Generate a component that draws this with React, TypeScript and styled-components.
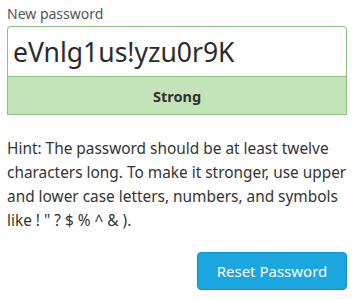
import { FC } from 'react'
import styled, { createGlobalStyle } from 'styled-components'

const GlobalStyle = createGlobalStyle`
  body {
    margin: 0;
    background: #fff;
    font-family: 'Noto Sans', 'Open Sans', sans-serif;
    color: #333;
  }
`

interface StrengthProps {
  level: string
}

const Strength: FC<StrengthProps> = ({ level }) => {
  return <StrengthBar>{level}</StrengthBar>
}

const App: FC = () => {
  return (
    <>
      <GlobalStyle />
      <Form>
        <Label htmlFor="pw">New password</Label>
        <PasswordInput id="pw" type="text" defaultValue="eVnlg1us!yzu0r9K" />
        <Strength level="Strong" />
        <Hint>
          Hint: The password should be at least twelve characters long. To make it stronger, use upper
          and lower case letters, numbers, and symbols like ! " ? $ % ^ &amp; ).
        </Hint>
        <Actions>
          <SubmitButton type="button">Reset Password</SubmitButton>
        </Actions>
      </Form>
    </>
  )
}

const Form = styled.div`
  display: flex;
  flex-direction: column;
  padding: 4px 7px 0 7px;
  width: 340px;
`

const Label = styled.label`
  font-size: 14px;
  line-height: 20px;
  color: #555;
  margin-bottom: 2px;
`

const PasswordInput = styled.input`
  box-sizing: border-box;
  height: 50px;
  width: 100%;
  margin: 0;
  padding: 0 5px;
  border: 1px solid #8fc186;
  border-bottom: none;
  border-radius: 4px 4px 0 0;
  font-family: 'Noto Sans', 'Open Sans', sans-serif;
  font-size: 26.5px;
  color: #2b2b2b;
  outline: none;
`

const StrengthBar = styled.div`
  box-sizing: border-box;
  height: 39px;
  display: flex;
  align-items: center;
  justify-content: center;
  background: #c3e3b9;
  border: 1px solid #8fc186;
  font-size: 14.5px;
  font-weight: 700;
  color: #333;
`

const Hint = styled.p`
  margin: 22px 0 0 0;
  font-size: 15.4px;
  line-height: 24px;
  color: #333;
`

const Actions = styled.div`
  display: flex;
  justify-content: flex-end;
  margin-top: 19px;
`

const SubmitButton = styled.button`
  width: 150px;
  height: 38px;
  border: 1px solid #1590c9;
  border-radius: 4px;
  background: #1ba6e0;
  color: #fff;
  font-family: 'Noto Sans', 'Open Sans', sans-serif;
  font-size: 15px;
  cursor: pointer;
`

export default App
